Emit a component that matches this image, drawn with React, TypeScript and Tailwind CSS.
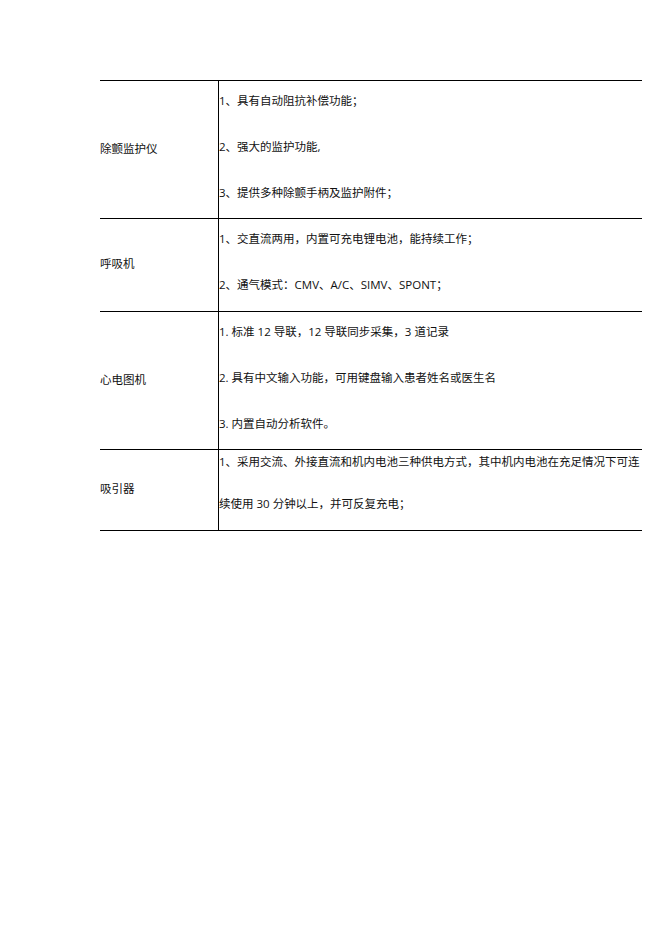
import React from "react";

const font = { fontFamily: '"Open Sans", "Noto Sans CJK SC", sans-serif' };

type Row = { name: string; h: string; items: React.ReactNode[]; wrap?: boolean };

const rows: Row[] = [
  {
    name: "除颤监护仪",
    h: "h-[138px]",
    items: ["1、具有自动阻抗补偿功能；", "2、强大的监护功能,", "3、提供多种除颤手柄及监护附件；"],
  },
  {
    name: "呼吸机",
    h: "h-[93px]",
    items: ["1、交直流两用，内置可充电锂电池，能持续工作；", "2、通气模式：CMV、A/C、SIMV、SPONT；"],
  },
  {
    name: "心电图机",
    h: "h-[138px]",
    items: ["1. 标准 12 导联，12 导联同步采集，3 道记录", "2. 具有中文输入功能，可用键盘输入患者姓名或医生名", "3. 内置自动分析软件。"],
  },
  {
    name: "吸引器",
    h: "h-[81px]",
    wrap: true,
    items: [
      <>
        1、采用交流、外接直流和机内电池三种供电方式，其中机内电池在充足情况下可连
        <br />
        续使用 30 分钟以上，并可反复充电；
      </>,
    ],
  },
];

export default function App() {
  return (
    <div className="w-[662px] h-[936px] bg-white text-[#111111] text-[11.5px]" style={font}>
      <div className="ml-[100px] pt-[80px] w-[542px]">
        <div className="border-t border-black">
          {rows.map((r, i) => (
            <div key={i} className={`flex border-b border-black ${r.h}`}>
              <div className="w-[119px] shrink-0 border-r border-black flex items-center">
                <span className="-mt-[2px] whitespace-nowrap">{r.name}</span>
              </div>
              <div className="flex-1 overflow-hidden">
                {r.wrap ? (
                  <div className="leading-[42px] -mt-[9px] whitespace-nowrap">{r.items[0]}</div>
                ) : (
                  r.items.map((t, j) => (
                    <div key={j} className="leading-[40px] mb-[6px] whitespace-nowrap">
                      {t}
                    </div>
                  ))
                )}
              </div>
            </div>
          ))}
        </div>
      </div>
    </div>
  );
}
